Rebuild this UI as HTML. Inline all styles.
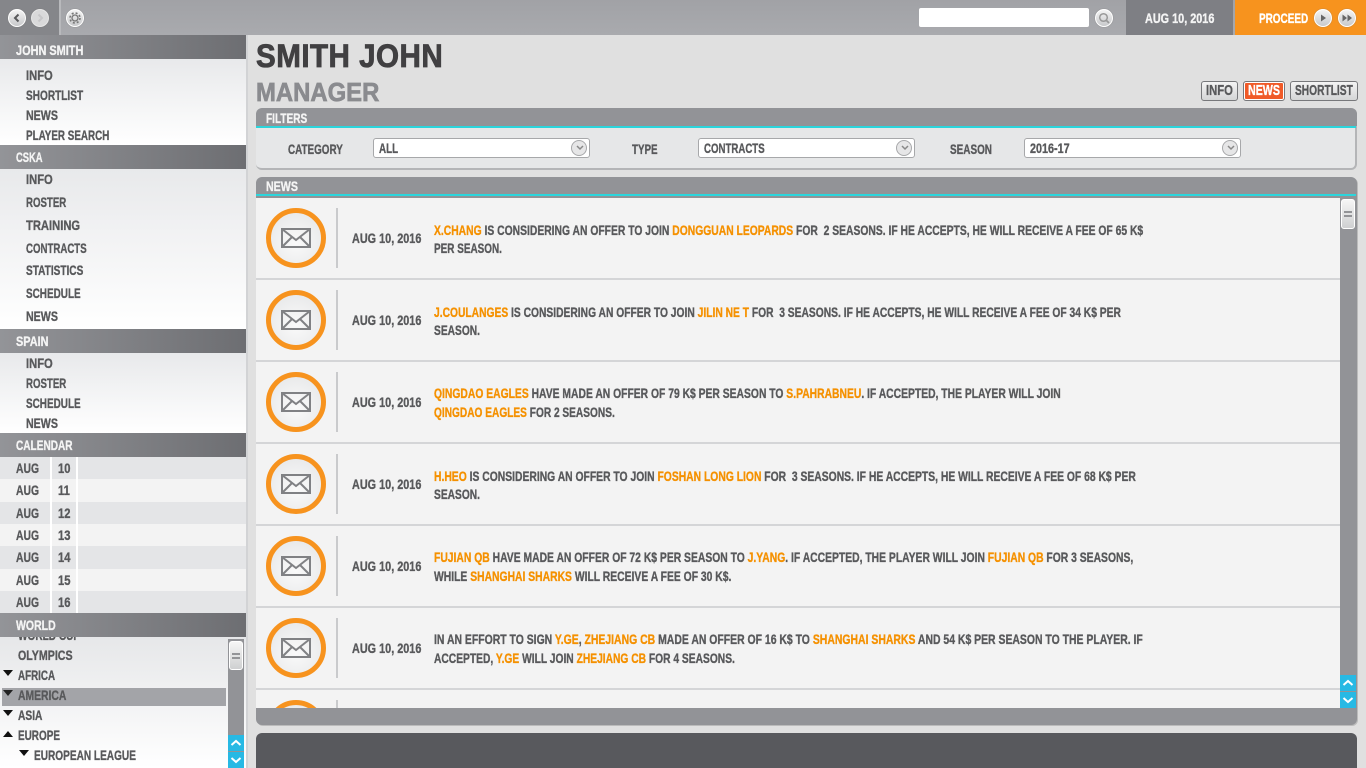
<!DOCTYPE html>
<html><head><meta charset="utf-8"><style>
html,body{margin:0;padding:0;width:1366px;height:768px;overflow:hidden;background:#e0e0e0}
body{position:relative;font-family:"Liberation Sans",sans-serif;font-weight:bold;font-size:14px;color:#58595b}
div,span.a,svg{position:absolute}
.t{position:absolute;white-space:nowrap;line-height:18px;transform-origin:0 50%;transform:scaleX(var(--s,.73));-webkit-text-stroke:.35px currentColor}
.o{color:#f59100}
.hd{left:0;width:246px;height:24px;background:linear-gradient(90deg,#939498,#6d6e72)}
.hd .t{left:16px;top:3px;color:#f4f4f4}
.m{left:26px}
.rowsep{left:256px;width:1084px;height:2px;background:#d4d5d7}
.circ{left:266px;width:50px;height:50px;border:5px solid #f7931e;border-radius:50%;background:radial-gradient(circle at 50% 60%,#fafafa,#e4e5e6)}
.dv{left:336px;width:2px;height:60px;background:#c9cacc}
.dt{left:352px;--s:.775}
.tx{left:434px}
.btn{width:24px;height:24px;border-radius:50%;background:linear-gradient(#f4f4f4,#c8c9cb);border:1px solid #fff;box-sizing:border-box;box-shadow:0 0 1px #777}
.sel{height:20px;box-sizing:border-box;background:#fff;border:1px solid #a7a8aa;border-radius:3px}
.sel .t{left:5px;top:0;line-height:18px}
.sel i{position:absolute;right:2px;top:1px;width:16px;height:16px;box-sizing:border-box;border:1px solid #a7a8aa;border-radius:50%;background:#e6e6e7}
.sel svg{right:5px;top:6px}
.tab{top:81px;height:20px;box-sizing:border-box;border:1px solid #77787b;border-radius:3px;background:linear-gradient(#f4f4f4,#d4d5d6);font-size:15px}
.tab .t{top:0;left:4px}
.cal{left:0;width:246px;height:23px}
.cal .t{top:2px}
.cal .t:first-child{left:16px;--s:.74}
.cal .t:last-child{left:58px;--s:.8}
.vl{top:457px;width:2px;height:156px;background:#fff}
.up{width:16px;height:16px;background:#27b9e4}
</style></head><body>

<div style="left:0;top:0;width:1366px;height:35px;background:linear-gradient(#a1a2a6,#a9aaae)"></div>
<div style="left:0;top:0;width:59px;height:35px;background:#85868a"></div>
<div style="left:59px;top:0;width:2px;height:35px;background:#b8b9bc"></div>
<div class="btn" style="left:8px;top:9px;width:18px;height:18px"></div>
<svg style="left:8px;top:9px" width="18" height="18"><path d="M10.500 5.500 7 9l3.500 3.500" fill="none" stroke="#58595b" stroke-width="2"/></svg>
<div class="btn" style="left:31px;top:9px;width:18px;height:18px;background:#d9d9da;border-color:#e8e8e8"></div>
<svg style="left:31px;top:9px" width="18" height="18"><path d="M7.500 5.500 11 9l-3.500 3.500" fill="none" stroke="#c6c6c8" stroke-width="2"/></svg>
<div class="btn" style="left:66px;top:9px;width:18px;height:18px"></div>
<svg style="left:66px;top:9px" width="18" height="18"><circle cx="9" cy="9" r="3" fill="none" stroke="#777" stroke-width="1.300"/><circle cx="9" cy="9" r="5" fill="none" stroke="#777" stroke-width="1.600" stroke-dasharray="2 2"/></svg>

<div style="left:919px;top:8px;width:170px;height:19px;background:#fff;border-radius:2px"></div>
<div class="btn" style="left:1095px;top:9px;width:18px;height:18px"></div>
<svg style="left:1095px;top:9px" width="18" height="18"><circle cx="8.500" cy="8.500" r="3.800" fill="none" stroke="#999" stroke-width="1.500"/><path d="M11.500 11.500 14 14" stroke="#999" stroke-width="1.800"/></svg>

<div style="left:1126px;top:0;width:107px;height:35px;background:#7e7f84"></div>
<div class="t" style="left:1145px;top:9px;color:#f4f4f4;--s:.775">AUG 10, 2016</div>
<div style="left:1235px;top:0;width:131px;height:35px;background:#f7931e"></div>
<div class="t" style="left:1259px;top:9px;color:#fff;--s:.71">PROCEED</div>
<div class="btn" style="left:1314px;top:9px;width:18px;height:18px"></div>
<svg style="left:1314px;top:9px" width="18" height="18"><path d="M7 5.500v7l5-3.500z" fill="#666"/></svg>
<div class="btn" style="left:1338px;top:9px;width:18px;height:18px"></div>
<svg style="left:1338px;top:9px" width="18" height="18"><path d="M4.500 5.500v7l4.500-3.500zM9.500 5.500v7l4.500-3.500z" fill="#666"/></svg>

<div style="left:0;top:35px;width:246px;height:733px;background:#f3f3f3"></div>
<div style="left:246px;top:35px;width:2px;height:733px;background:#d2d3d5"></div>

<div style="left:0;top:59px;width:246px;height:86px;background:linear-gradient(#e8e9eb,#fff)"></div>
<div style="left:0;top:169px;width:246px;height:160px;background:linear-gradient(#e8e9eb,#fff)"></div>
<div style="left:0;top:353px;width:246px;height:80px;background:linear-gradient(#e8e9eb,#fff)"></div>

<div class="hd" style="top:35px"><span class="t" style="top:6px;--s:.78">JOHN SMITH</span></div>
<span class="t m" style="top:66px;--s:.8">INFO</span>
<span class="t m" style="top:86px;--s:.72">SHORTLIST</span>
<span class="t m" style="top:106px;--s:.76">NEWS</span>
<span class="t m" style="top:126px;--s:.703">PLAYER SEARCH</span>

<div class="hd" style="top:145px"><span class="t" style="--s:.67">CSKA</span></div>
<span class="t m" style="top:170px;--s:.8">INFO</span>
<span class="t m" style="top:193px;--s:.69">ROSTER</span>
<span class="t m" style="top:216px;--s:.8">TRAINING</span>
<span class="t m" style="top:239px;--s:.69">CONTRACTS</span>
<span class="t m" style="top:261px;--s:.72">STATISTICS</span>
<span class="t m" style="top:284px;--s:.71">SCHEDULE</span>
<span class="t m" style="top:307px;--s:.76">NEWS</span>

<div class="hd" style="top:329px"><span class="t" style="--s:.78">SPAIN</span></div>
<span class="t m" style="top:354px;--s:.8">INFO</span>
<span class="t m" style="top:374px;--s:.69">ROSTER</span>
<span class="t m" style="top:394px;--s:.71">SCHEDULE</span>
<span class="t m" style="top:414px;--s:.76">NEWS</span>

<div class="hd" style="top:433px"><span class="t" style="--s:.72">CALENDAR</span></div>
<div class="cal" style="top:457px;background:#e4e5e7"><span class="t">AUG</span><span class="t">10</span></div>
<div class="cal" style="top:479px;background:#f3f3f3"><span class="t">AUG</span><span class="t">11</span></div>
<div class="cal" style="top:502px;background:#e4e5e7"><span class="t">AUG</span><span class="t">12</span></div>
<div class="cal" style="top:524px;background:#f3f3f3"><span class="t">AUG</span><span class="t">13</span></div>
<div class="cal" style="top:546px;background:#e4e5e7"><span class="t">AUG</span><span class="t">14</span></div>
<div class="cal" style="top:569px;background:#f3f3f3"><span class="t">AUG</span><span class="t">15</span></div>
<div class="cal" style="top:591px;height:22px;background:#e4e5e7"><span class="t">AUG</span><span class="t">16</span></div>
<div class="vl" style="left:50px"></div>
<div class="vl" style="left:76px"></div>

<div style="left:0;top:637px;width:246px;height:131px;background:linear-gradient(#e6e7e9,#fff)"></div>
<div style="left:2px;top:688px;width:224px;height:18px;background:#a3a4a8"></div>
<span class="t" style="left:18px;top:626px;--s:.72">WORLD CUP</span>
<span class="t" style="left:18px;top:646px;--s:.76">OLYMPICS</span>
<span class="t" style="left:18px;top:666px;--s:.70">AFRICA</span>
<span class="t" style="left:18px;top:686px;--s:.74">AMERICA</span>
<span class="t" style="left:18px;top:706px;--s:.73">ASIA</span>
<span class="t" style="left:18px;top:726px;--s:.71">EUROPE</span>
<span class="t" style="left:34px;top:746px;--s:.72">EUROPEAN LEAGUE</span>
<svg style="left:3px;top:670px" width="10" height="6"><path d="M0 0h10L5 6z" fill="#111"/></svg>
<svg style="left:3px;top:690px" width="10" height="6"><path d="M0 0h10L5 6z" fill="#222"/></svg>
<svg style="left:3px;top:710px" width="10" height="6"><path d="M0 0h10L5 6z" fill="#111"/></svg>
<svg style="left:3px;top:731px" width="10" height="6"><path d="M0 6h10L5 0z" fill="#111"/></svg>
<svg style="left:19px;top:750px" width="10" height="6"><path d="M0 0h10L5 6z" fill="#111"/></svg>
<div style="left:228px;top:639px;width:16px;height:129px;background:#929397"></div>
<div style="left:229px;top:641px;width:14px;height:29px;box-sizing:border-box;border:1px solid #fff;border-radius:3px;background:linear-gradient(#f6f6f6,#cfd0d1)"></div>
<div style="left:232px;top:653px;width:8px;height:2px;background:#939497"></div>
<div style="left:232px;top:657px;width:8px;height:2px;background:#939497"></div>
<div class="up" style="left:228px;top:735px"></div>
<svg style="left:228px;top:735px" width="16" height="16"><path d="M3.500 10 8 6l4.500 4" fill="none" stroke="#fff" stroke-width="2"/></svg>
<div class="up" style="left:228px;top:752px"></div>
<svg style="left:228px;top:752px" width="16" height="16"><path d="M3.500 6 8 10l4.500-4" fill="none" stroke="#fff" stroke-width="2"/></svg>
<div class="hd" style="top:613px"><span class="t" style="--s:.75">WORLD</span></div>

<span class="t" style="left:256px;top:38px;font-size:32px;line-height:36px;color:#414042;letter-spacing:.5px;--s:.925;-webkit-text-stroke:.8px #414042">SMITH JOHN</span>
<span class="t" style="left:256px;top:76px;font-size:26px;line-height:32px;color:#8a8b8f;--s:.918;-webkit-text-stroke:.7px #8a8b8f">MANAGER</span>

<div class="tab" style="left:1201px;width:37px"><span class="t" style="--s:.75">INFO</span></div>
<div class="tab" style="left:1243px;width:42px;background:#f05a28;color:#fff;box-shadow:inset 0 0 0 1px #fff"><span class="t" style="--s:.71">NEWS</span></div>
<div class="tab" style="left:1290px;width:68px"><span class="t" style="--s:.68">SHORTLIST</span></div>

<div style="left:256px;top:108px;width:1099px;height:60px;background:#e6e7e8;border-radius:6px;border-bottom:2px solid #b4b5b7;border-right:2px solid #b4b5b7"></div>
<div style="left:256px;top:108px;width:1101px;height:18px;background:#929397;border-radius:6px 6px 0 0"></div>
<div style="left:256px;top:126px;width:1100px;height:2px;background:#2bd5dc"></div>
<span class="t" style="left:266px;top:109px;color:#f4f4f4;--s:.72">FILTERS</span>
<span class="t" style="left:288px;top:140px;--s:.705">CATEGORY</span>
<div class="sel" style="left:373px;top:138px;width:217px"><span class="t" style="--s:.7">ALL</span><i></i><svg width="8" height="6"><path d="M1 1l3 3 3-3" fill="none" stroke="#888" stroke-width="1.500"/></svg></div>
<span class="t" style="left:632px;top:140px;--s:.7">TYPE</span>
<div class="sel" style="left:698px;top:138px;width:217px"><span class="t" style="--s:.69">CONTRACTS</span><i></i><svg width="8" height="6"><path d="M1 1l3 3 3-3" fill="none" stroke="#888" stroke-width="1.500"/></svg></div>
<span class="t" style="left:950px;top:140px;--s:.71">SEASON</span>
<div class="sel" style="left:1024px;top:138px;width:217px"><span class="t" style="--s:.77">2016-17</span><i></i><svg width="8" height="6"><path d="M1 1l3 3 3-3" fill="none" stroke="#888" stroke-width="1.500"/></svg></div>

<div style="left:256px;top:177px;width:1101px;height:548px;background:#929397;border-radius:6px;box-shadow:1px 1px 0 #bbb"></div>
<div style="left:256px;top:194px;width:1100px;height:2px;background:#2bd5dc"></div>
<span class="t" style="left:266px;top:177px;color:#f4f4f4;--s:.76">NEWS</span>
<div style="left:256px;top:198px;width:1084px;height:510px;background:#f3f3f3;overflow:hidden">
  <div class="circ" style="left:10px;top:502px"></div>
</div>

<div class="rowsep" style="top:278px"></div>
<div class="rowsep" style="top:360px"></div>
<div class="rowsep" style="top:442px"></div>
<div class="rowsep" style="top:524px"></div>
<div class="rowsep" style="top:606px"></div>
<div class="rowsep" style="top:688px"></div>
<div class="dv" style="top:700px;height:8px"></div>

<div class="circ" style="top:208px"></div><div class="dv" style="top:208px"></div>
<svg style="left:281px;top:228px" width="30" height="20"><path d="M1 1h28v18H1zM1 1l14 11L29 1M1 19l10-10M29 19 19 9" fill="none" stroke="#808184" stroke-width="2"/></svg>
<span class="t dt" style="top:229px">AUG 10, 2016</span>
<span class="t tx" style="top:221px;--s:.738"><span class="o">X.CHANG</span> IS CONSIDERING AN OFFER TO JOIN <span class="o">DONGGUAN LEOPARDS</span> FOR&nbsp; 2 SEASONS. IF HE ACCEPTS, HE WILL RECEIVE A FEE OF 65 K$</span>
<span class="t tx" style="top:239px;--s:.71">PER SEASON.</span>

<div class="circ" style="top:290px"></div><div class="dv" style="top:290px"></div>
<svg style="left:281px;top:310px" width="30" height="20"><path d="M1 1h28v18H1zM1 1l14 11L29 1M1 19l10-10M29 19 19 9" fill="none" stroke="#808184" stroke-width="2"/></svg>
<span class="t dt" style="top:311px">AUG 10, 2016</span>
<span class="t tx" style="top:303px;--s:.7336"><span class="o">J.COULANGES</span> IS CONSIDERING AN OFFER TO JOIN <span class="o">JILIN NE T</span> FOR&nbsp; 3 SEASONS. IF HE ACCEPTS, HE WILL RECEIVE A FEE OF 34 K$ PER</span>
<span class="t tx" style="top:321px">SEASON.</span>

<div class="circ" style="top:372px"></div><div class="dv" style="top:372px"></div>
<svg style="left:281px;top:392px" width="30" height="20"><path d="M1 1h28v18H1zM1 1l14 11L29 1M1 19l10-10M29 19 19 9" fill="none" stroke="#808184" stroke-width="2"/></svg>
<span class="t dt" style="top:393px">AUG 10, 2016</span>
<span class="t tx" style="top:384px;--s:.738"><span class="o">QINGDAO EAGLES</span> HAVE MADE AN OFFER OF 79 K$ PER SEASON TO <span class="o">S.PAHRABNEU</span>. IF ACCEPTED, THE PLAYER WILL JOIN</span>
<span class="t tx" style="top:403px;--s:.724"><span class="o">QINGDAO EAGLES</span> FOR 2 SEASONS.</span>

<div class="circ" style="top:454px"></div><div class="dv" style="top:454px"></div>
<svg style="left:281px;top:474px" width="30" height="20"><path d="M1 1h28v18H1zM1 1l14 11L29 1M1 19l10-10M29 19 19 9" fill="none" stroke="#808184" stroke-width="2"/></svg>
<span class="t dt" style="top:475px">AUG 10, 2016</span>
<span class="t tx" style="top:467px;--s:.7385"><span class="o">H.HEO</span> IS CONSIDERING AN OFFER TO JOIN <span class="o">FOSHAN LONG LION</span> FOR&nbsp; 3 SEASONS. IF HE ACCEPTS, HE WILL RECEIVE A FEE OF 68 K$ PER</span>
<span class="t tx" style="top:485px">SEASON.</span>

<div class="circ" style="top:536px"></div><div class="dv" style="top:536px"></div>
<svg style="left:281px;top:556px" width="30" height="20"><path d="M1 1h28v18H1zM1 1l14 11L29 1M1 19l10-10M29 19 19 9" fill="none" stroke="#808184" stroke-width="2"/></svg>
<span class="t dt" style="top:557px">AUG 10, 2016</span>
<span class="t tx" style="top:548px;--s:.739"><span class="o">FUJIAN QB</span> HAVE MADE AN OFFER OF 72 K$ PER SEASON TO <span class="o">J.YANG</span>. IF ACCEPTED, THE PLAYER WILL JOIN <span class="o">FUJIAN QB</span> FOR 3 SEASONS,</span>
<span class="t tx" style="top:567px;--s:.739">WHILE <span class="o">SHANGHAI SHARKS</span> WILL RECEIVE A FEE OF 30 K$.</span>

<div class="circ" style="top:618px"></div><div class="dv" style="top:618px"></div>
<svg style="left:281px;top:638px" width="30" height="20"><path d="M1 1h28v18H1zM1 1l14 11L29 1M1 19l10-10M29 19 19 9" fill="none" stroke="#808184" stroke-width="2"/></svg>
<span class="t dt" style="top:639px">AUG 10, 2016</span>
<span class="t tx" style="top:630px;--s:.745">IN AN EFFORT TO SIGN <span class="o">Y.GE</span>, <span class="o">ZHEJIANG CB</span> MADE AN OFFER OF 16 K$ TO <span class="o">SHANGHAI SHARKS</span> AND 54 K$ PER SEASON TO THE PLAYER. IF</span>
<span class="t tx" style="top:649px;--s:.732">ACCEPTED, <span class="o">Y.GE</span> WILL JOIN <span class="o">ZHEJIANG CB</span> FOR 4 SEASONS.</span>

<div style="left:1341px;top:199px;width:14px;height:30px;box-sizing:border-box;border:1px solid #fff;border-radius:3px;background:linear-gradient(#f6f6f6,#cfd0d1)"></div>
<div style="left:1344px;top:211px;width:8px;height:2px;background:#939497"></div>
<div style="left:1344px;top:215px;width:8px;height:2px;background:#939497"></div>
<div class="up" style="left:1340px;top:675px"></div>
<svg style="left:1340px;top:675px" width="16" height="16"><path d="M3.500 10 8 6l4.500 4" fill="none" stroke="#fff" stroke-width="2"/></svg>
<div class="up" style="left:1340px;top:692px"></div>
<svg style="left:1340px;top:692px" width="16" height="16"><path d="M3.500 6 8 10l4.500-4" fill="none" stroke="#fff" stroke-width="2"/></svg>

<div style="left:256px;top:733px;width:1101px;height:35px;background:#58595d;border-radius:6px 6px 0 0"></div>
</body></html>
